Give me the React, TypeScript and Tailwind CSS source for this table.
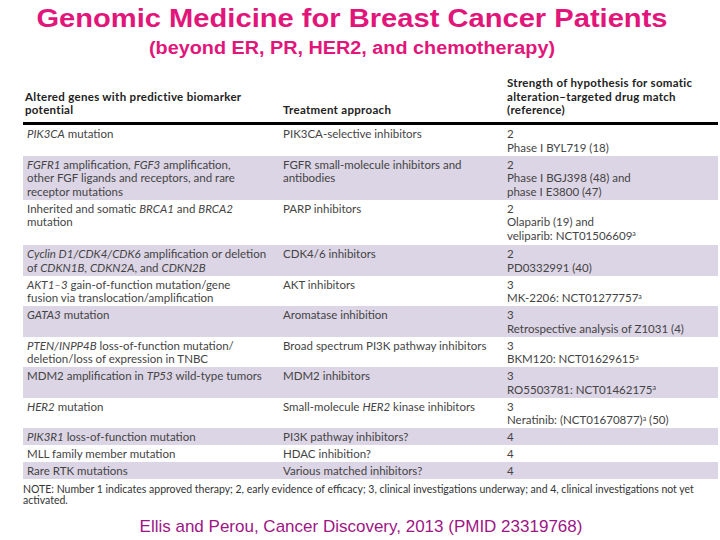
type Row = {
  gene: React.ReactNode;
  treatment: React.ReactNode;
  level: string;
  evidence?: React.ReactNode;
  shade?: boolean;
  extra?: string;
};

const rows: Row[] = [
  {
    gene: (
      <>
        <i>PIK3CA</i> mutation
      </>
    ),
    treatment: "PIK3CA-selective inhibitors",
    level: "2",
    evidence: "Phase I BYL719 (18)",
  },
  {
    gene: (
      <>
        <i>FGFR1</i> amplification, <i>FGF3</i> amplification,
        <br />
        other FGF ligands and receptors, and rare
        <br />
        receptor mutations
      </>
    ),
    treatment: (
      <>
        FGFR small-molecule inhibitors and
        <br />
        antibodies
      </>
    ),
    level: "2",
    evidence: (
      <>
        Phase I BGJ398 (48) and
        <br />
        phase I E3800 (47)
      </>
    ),
    shade: true,
  },
  {
    gene: (
      <>
        Inherited and somatic <i>BRCA1</i> and <i>BRCA2</i>
        <br />
        mutation
      </>
    ),
    treatment: "PARP inhibitors",
    level: "2",
    evidence: (
      <>
        Olaparib (19) and
        <br />
        veliparib: NCT01506609<sup className="text-[7px]">a</sup>
      </>
    ),
    extra: "pb-[3px]",
  },
  {
    gene: (
      <>
        <i>Cyclin D1/CDK4/CDK6</i> amplification or deletion
        <br />
        of <i>CDKN1B</i>, <i>CDKN2A</i>, and <i>CDKN2B</i>
      </>
    ),
    treatment: "CDK4/6 inhibitors",
    level: "2",
    evidence: "PD0332991 (40)",
    shade: true,
  },
  {
    gene: (
      <>
        <i>AKT1–3</i> gain-of-function mutation/gene
        <br />
        fusion via translocation/amplification
      </>
    ),
    treatment: "AKT inhibitors",
    level: "3",
    evidence: (
      <>
        MK-2206: NCT01277757<sup className="text-[7px]">a</sup>
      </>
    ),
  },
  {
    gene: (
      <>
        <i>GATA3</i> mutation
      </>
    ),
    treatment: "Aromatase inhibition",
    level: "3",
    evidence: "Retrospective analysis of Z1031 (4)",
    shade: true,
  },
  {
    gene: (
      <>
        <i>PTEN/INPP4B</i> loss-of-function mutation/
        <br />
        deletion/loss of expression in TNBC
      </>
    ),
    treatment: "Broad spectrum PI3K pathway inhibitors",
    level: "3",
    evidence: (
      <>
        BKM120: NCT01629615<sup className="text-[7px]">a</sup>
      </>
    ),
  },
  {
    gene: (
      <>
        MDM2 amplification in <i>TP53</i> wild-type tumors
      </>
    ),
    treatment: "MDM2 inhibitors",
    level: "3",
    evidence: (
      <>
        RO5503781: NCT01462175<sup className="text-[7px]">a</sup>
      </>
    ),
    shade: true,
  },
  {
    gene: (
      <>
        <i>HER2</i> mutation
      </>
    ),
    treatment: (
      <>
        Small-molecule <i>HER2</i> kinase inhibitors
      </>
    ),
    level: "3",
    evidence: (
      <>
        Neratinib: (NCT01670877)<sup className="text-[7px]">a</sup> (50)
      </>
    ),
  },
  {
    gene: (
      <>
        <i>PIK3R1</i> loss-of-function mutation
      </>
    ),
    treatment: "PI3K pathway inhibitors?",
    level: "4",
    shade: true,
  },
  {
    gene: "MLL family member mutation",
    treatment: "HDAC inhibition?",
    level: "4",
  },
  {
    gene: "Rare RTK mutations",
    treatment: "Various matched inhibitors?",
    level: "4",
    shade: true,
  },
];

export default function App() {
  return (
    <main className="h-[540px] w-[720px] overflow-hidden bg-white">
      <header className="pr-[16px] pt-[3px] text-center font-['Liberation_Sans',Arial,sans-serif] font-bold text-[#e2157a]">
        <h1 className="scale-x-[1.12] text-[26px] leading-[30px]">
          Genomic Medicine for Breast Cancer Patients
        </h1>
        <p className="mt-[4px] scale-x-[1.1] text-[18px] leading-[22px]">
          (beyond ER, PR, HER2, and chemotherapy)
        </p>
      </header>

      <section className="ml-[23px] mt-[17px] w-[695px] font-['Lato',sans-serif] text-[11.5px] text-[#444]">
        <div className="grid grid-cols-[256px_224px_1fr] items-end border-b-[3px] border-black pb-[5px] text-[11.5px] leading-[13.5px] font-bold tracking-[0.3px] text-[#222]">
          <div className="pl-[2px]">
            Altered genes with predictive biomarker
            <br />
            potential
          </div>
          <div className="pl-[4px]">Treatment approach</div>
          <div className="pl-[4px]">
            Strength of hypothesis for somatic
            <br />
            alteration–targeted drug match
            <br />
            (reference)
          </div>
        </div>

        <div className="mt-px">
          {rows.map((row, i) => (
            <div
              key={i}
              className={`grid grid-cols-[256px_224px_1fr] py-[1.75px] leading-[13.5px] ${
                row.shade ? "bg-[#dcd5e5]" : "bg-white"
              } ${row.extra ?? ""}`}
            >
              <div className="pl-[4px]">{row.gene}</div>
              <div className="pl-[4px]">{row.treatment}</div>
              <div className="pl-[4px]">
                {row.level}
                {row.evidence && (
                  <>
                    <br />
                    {row.evidence}
                  </>
                )}
              </div>
            </div>
          ))}
        </div>

        <p className="mt-[5px] text-[10.5px] leading-[11px] text-[#333]">
          NOTE: Number 1 indicates approved therapy; 2, early evidence of
          efficacy; 3, clinical investigations underway; and 4, clinical
          investigations not yet activated.
        </p>
      </section>

      <p className="mt-[11px] pl-[2px] text-center font-['Liberation_Sans',Arial,sans-serif] text-[17px] leading-[20px] text-[#9e1585]">
        Ellis and Perou, Cancer Discovery, 2013 (PMID 23319768)
      </p>
    </main>
  );
}
